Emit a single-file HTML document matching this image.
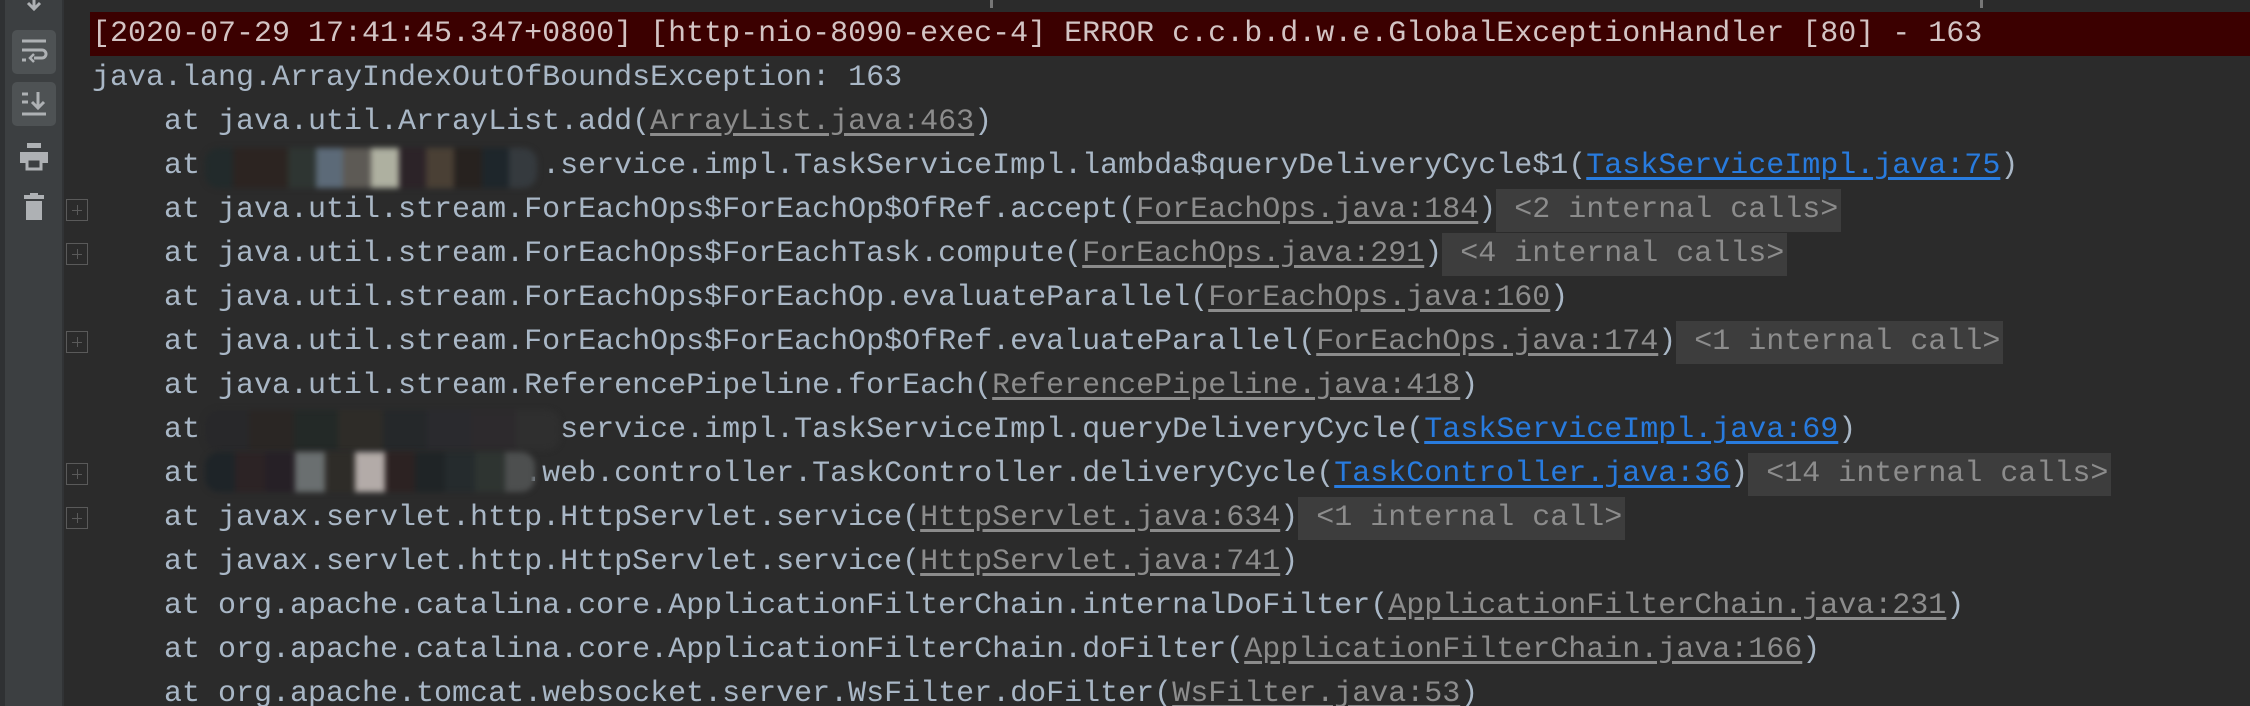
<!DOCTYPE html>
<html><head><meta charset="utf-8"><style>
html,body{margin:0;padding:0;background:#2b2b2b;width:2250px;height:706px;overflow:hidden;position:relative}
.sb{position:absolute;left:0;top:0;width:5px;height:706px;background:#2f3133}
.sb2{position:absolute;left:5px;top:0;width:57px;height:706px;background:#3c3f41}
.sb3{position:absolute;left:62px;top:0;width:2px;height:706px;background:#313335}
.btn{position:absolute;left:12px;width:44px;height:44px;background:#4e5254;border-radius:5px}
.r{position:absolute;left:0;width:2250px;height:44px;line-height:44px;white-space:pre;font-family:"Liberation Mono",monospace;font-size:30px;color:#a9b7c6}
.r span.t{position:absolute;left:92px;top:0}
.gl{color:#8c8c8c;text-decoration:underline;text-underline-offset:4px}
.bl{color:#287bde;text-decoration:underline;text-underline-offset:4px}
.ic{background:#3d3d3d;color:#8c8c8c;padding:4px 3px 5px 0}
.fold{position:absolute;left:66px;width:20px;height:20px;border:1px solid #5a5a5a;box-sizing:content-box}
.fold:before{content:"";position:absolute;left:5px;top:10px;width:10px;height:1px;background:#5a5a5a}
.fold:after{content:"";position:absolute;left:10px;top:5px;width:1px;height:10px;background:#5a5a5a}
.blur{position:absolute;height:40px;filter:blur(3px);border-radius:14px;overflow:hidden;display:flex}
.blur i{display:block;flex:1;height:100%}
</style></head><body>
<div class="sb"></div><div class="sb2"></div><div class="sb3"></div>
<svg style="position:absolute;left:22px;top:0" width="24" height="12"><path d="M12 0v8M6 3l6 6 6-6" stroke="#aeb1b4" stroke-width="3" fill="none"/></svg>
<div class="btn" style="top:30px"></div>
<svg style="position:absolute;left:20px;top:38px" width="28" height="28"><path d="M2 3h24M2 12h20a4 4 0 0 1 0 8h-8M2 22h4" stroke="#aeb1b4" stroke-width="3" fill="none"/><path d="M14 16l-4 4 4 4" stroke="#aeb1b4" stroke-width="2.5" fill="none"/></svg>
<div class="btn" style="top:82px"></div>
<svg style="position:absolute;left:20px;top:90px" width="28" height="28"><path d="M2 4h6M2 12h6M2 24h24M18 2v16M12 12l6 6 6-6" stroke="#aeb1b4" stroke-width="3" fill="none"/></svg>
<svg style="position:absolute;left:20px;top:143px" width="28" height="28"><rect x="7" y="0" width="14" height="5" fill="#aeb1b4"/><rect x="0" y="9" width="28" height="11" fill="#aeb1b4"/><rect x="7" y="16" width="14" height="10" fill="#3c3f41" stroke="#aeb1b4" stroke-width="3"/></svg>
<svg style="position:absolute;left:24px;top:193px" width="22" height="28"><rect x="0" y="2" width="20" height="4" fill="#aeb1b4"/><rect x="6" y="0" width="8" height="3" fill="#aeb1b4"/><rect x="2" y="8" width="16" height="19" fill="#aeb1b4"/></svg>

<div style="position:absolute;left:90px;top:12px;width:2160px;height:44px;background:#3b0000"></div>
<div style="position:absolute;left:990px;top:0;width:3px;height:8px;background:#777"></div>
<div style="position:absolute;left:1980px;top:0;width:3px;height:8px;background:#777"></div>

<div class="r" style="top:12px"><span class="t" style="color:#d3c4c4">[2020-07-29 17:41:45.347+0800] [http-nio-8090-exec-4] ERROR c.c.b.d.w.e.GlobalExceptionHandler [80] - 163</span></div>
<div class="r" style="top:56px"><span class="t">java.lang.ArrayIndexOutOfBoundsException: 163</span></div>
<div class="r" style="top:100px"><span class="t">    at java.util.ArrayList.add(<span class="gl">ArrayList.java:463</span>)</span></div>
<div class="r" style="top:144px"><span class="t">    at                   .service.impl.TaskServiceImpl.lambda$queryDeliveryCycle$1(<span class="bl">TaskServiceImpl.java:75</span>)</span></div>
<div class="r" style="top:188px"><span class="t">    at java.util.stream.ForEachOps$ForEachOp$OfRef.accept(<span class="gl">ForEachOps.java:184</span>)<span class="ic"> &lt;2 internal calls&gt;</span></span></div>
<div class="r" style="top:232px"><span class="t">    at java.util.stream.ForEachOps$ForEachTask.compute(<span class="gl">ForEachOps.java:291</span>)<span class="ic"> &lt;4 internal calls&gt;</span></span></div>
<div class="r" style="top:276px"><span class="t">    at java.util.stream.ForEachOps$ForEachOp.evaluateParallel(<span class="gl">ForEachOps.java:160</span>)</span></div>
<div class="r" style="top:320px"><span class="t">    at java.util.stream.ForEachOps$ForEachOp$OfRef.evaluateParallel(<span class="gl">ForEachOps.java:174</span>)<span class="ic"> &lt;1 internal call&gt;</span></span></div>
<div class="r" style="top:364px"><span class="t">    at java.util.stream.ReferencePipeline.forEach(<span class="gl">ReferencePipeline.java:418</span>)</span></div>
<div class="r" style="top:408px"><span class="t">    at                    service.impl.TaskServiceImpl.queryDeliveryCycle(<span class="bl">TaskServiceImpl.java:69</span>)</span></div>
<div class="r" style="top:452px"><span class="t">    at                  .web.controller.TaskController.deliveryCycle(<span class="bl">TaskController.java:36</span>)<span class="ic"> &lt;14 internal calls&gt;</span></span></div>
<div class="r" style="top:496px"><span class="t">    at javax.servlet.http.HttpServlet.service(<span class="gl">HttpServlet.java:634</span>)<span class="ic"> &lt;1 internal call&gt;</span></span></div>
<div class="r" style="top:540px"><span class="t">    at javax.servlet.http.HttpServlet.service(<span class="gl">HttpServlet.java:741</span>)</span></div>
<div class="r" style="top:584px"><span class="t">    at org.apache.catalina.core.ApplicationFilterChain.internalDoFilter(<span class="gl">ApplicationFilterChain.java:231</span>)</span></div>
<div class="r" style="top:628px"><span class="t">    at org.apache.catalina.core.ApplicationFilterChain.doFilter(<span class="gl">ApplicationFilterChain.java:166</span>)</span></div>
<div class="r" style="top:672px"><span class="t">    at org.apache.tomcat.websocket.server.WsFilter.doFilter(<span class="gl">WsFilter.java:53</span>)</span></div>

<div class="fold" style="top:199px"></div>
<div class="fold" style="top:243px"></div>
<div class="fold" style="top:331px"></div>
<div class="fold" style="top:463px"></div>
<div class="fold" style="top:507px"></div>

<div class="blur" style="left:205px;top:148px;width:332px">
<i style="background:#222a2b"></i><i style="background:#2c2421"></i><i style="background:#2c2421"></i><i style="background:#2e3532"></i><i style="background:#5c6a78"></i><i style="background:#5d5a55"></i><i style="background:#aeb0a0"></i><i style="background:#2c2328"></i><i style="background:#4a4035"></i><i style="background:#27221f"></i><i style="background:#1e262b"></i><i style="background:#353a3e"></i></div>
<div class="blur" style="left:205px;top:410px;width:355px">
<i style="background:#28282a"></i><i style="background:#2a2624"></i><i style="background:#232927"></i><i style="background:#2e2c28"></i><i style="background:#25282a"></i><i style="background:#2a2a2e"></i><i style="background:#2d2a2d"></i><i style="background:#2f2f2f"></i></div>
<div class="blur" style="left:205px;top:452px;width:330px">
<i style="background:#1e2428"></i><i style="background:#2c2325"></i><i style="background:#262026"></i><i style="background:#6a6f70"></i><i style="background:#2e2c28"></i><i style="background:#b3aba8"></i><i style="background:#2c2222"></i><i style="background:#1f2426"></i><i style="background:#252b2d"></i><i style="background:#2e3431"></i><i style="background:#4d4f4f"></i></div>
</body></html>
